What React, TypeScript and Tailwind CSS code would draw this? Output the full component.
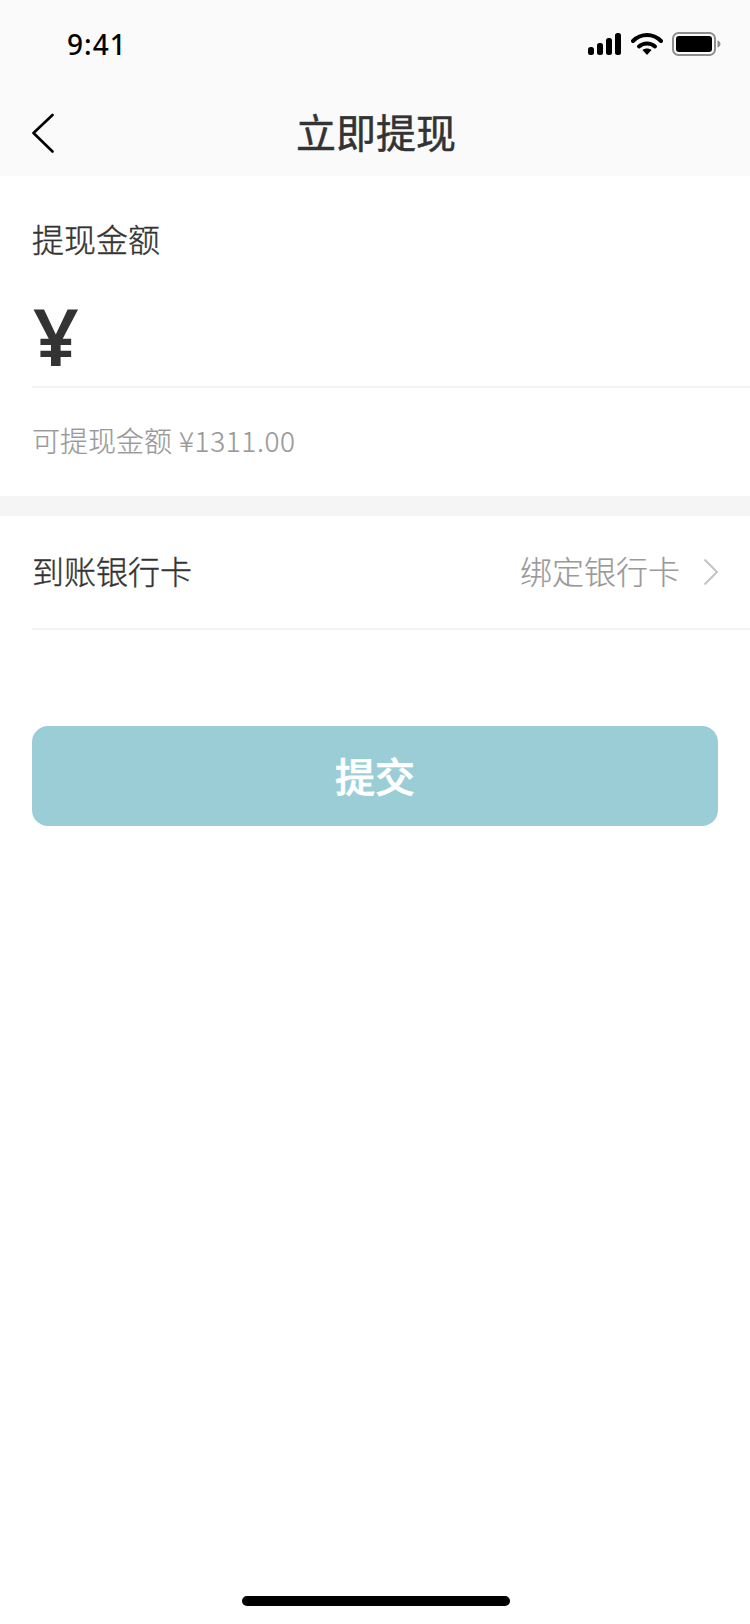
const cjk = 'font-["Noto_Sans_CJK_SC","Noto_Sans",sans-serif]'

function StatusIcons() {
  return (
    <div className="flex items-center">
      {/* Signal */}
      <svg width="36" height="22" viewBox="0 0 36 22" className="mr-[8px]">
        <rect x="1" y="14" width="6" height="8" rx="2.5" fill="#000" />
        <rect x="10" y="10" width="6" height="12" rx="2.5" fill="#000" />
        <rect x="19" y="5" width="6" height="17" rx="2.5" fill="#000" />
        <rect x="28" y="0" width="6" height="22" rx="2.5" fill="#000" />
      </svg>
      {/* Wifi */}
      <svg width="32" height="22" viewBox="0 0 32 22" className="mr-[9px]">
        <path d="M2 8 C10 0 22 0 30 8" fill="none" stroke="#000" strokeWidth="4" strokeLinecap="round" />
        <path d="M8 13.5 C12.5 9.5 19.5 9.5 24 13.5" fill="none" stroke="#000" strokeWidth="4" strokeLinecap="round" />
        <path d="M11.5 17 L16 22 L20.5 17 C18 15 14 15 11.5 17 Z" fill="#000" />
      </svg>
      {/* Battery */}
      <svg width="50" height="24" viewBox="0 0 50 24">
        <rect x="1" y="1" width="42" height="22" rx="5.5" fill="none" stroke="#8e8e8e" strokeWidth="2" />
        <rect x="4" y="4" width="36" height="16" rx="3" fill="#000" />
        <path d="M45.5 8.5 C47.5 9.2 48.5 10.4 48.5 12 C48.5 13.6 47.5 14.8 45.5 15.5 Z" fill="#8e8e8e" />
      </svg>
    </div>
  )
}

export default function App() {
  return (
    <div className={`w-[750px] h-[1624px] bg-white flex flex-col ${cjk}`}>
      {/* Header */}
      <div className="bg-[#fafafa] h-[176px] shrink-0">
        <div className="h-[88px] flex items-center justify-between pl-[67px] pr-[28px]">
          <span className='text-[28px] leading-none font-["Noto_Sans",sans-serif] font-medium text-black tracking-[1px]'>9:41</span>
          <StatusIcons />
        </div>
        <div className="h-[88px] relative flex items-center justify-center pl-[2px] pb-[2px]">
          <svg width="24" height="40" viewBox="0 0 24 40" className="absolute left-[31px] top-[25px]">
            <path d="M21.5 2 L2.5 20 L21.5 38.5" fill="none" stroke="#000" strokeWidth="2.6" strokeLinecap="round" strokeLinejoin="round" />
          </svg>
          <span className="text-[40px] leading-none font-normal text-[#333] [-webkit-text-stroke:0.5px_#333]">立即提现</span>
        </div>
      </div>

      {/* Amount */}
      <div className="pl-[32px] pt-[44px] shrink-0">
        <div className="text-[32px] leading-[36px] font-light text-[#333] [-webkit-text-stroke:0.4px_#333]">提现金额</div>
        <div className="h-[132px] pt-[28px] border-b-2 border-[#f3f3f3] flex items-center">
          <span className='text-[80px] leading-none font-["Noto_Sans",sans-serif] font-semibold text-[#333] ml-[1px]'>¥</span>
        </div>
        <div className="h-[108px] pb-[5px] flex items-center text-[28px] font-light text-[#999] [-webkit-text-stroke:0.2px_#999]">
          可提现金额 <span className="ml-[7px] tracking-[0.6px]">¥1311.00</span>
        </div>
      </div>

      <div className="h-[20px] bg-[#f5f5f5] shrink-0" />

      {/* Bank card row */}
      <div className="ml-[32px] h-[114px] pb-[5px] border-b-2 border-[#f3f3f3] flex items-center justify-between pr-[31px] shrink-0">
        <span className="text-[32px] font-light text-[#333] [-webkit-text-stroke:0.4px_#333]">到账银行卡</span>
        <div className="flex items-center">
          <span className="text-[32px] font-light text-[#999] [-webkit-text-stroke:0.2px_#999]">绑定银行卡</span>
          <svg width="16" height="28" viewBox="0 0 16 28" className="ml-[23px] mt-[4px]">
            <path d="M1.5 1.5 L14 14 L1.5 26.5" fill="none" stroke="#c4c4c4" strokeWidth="2" />
          </svg>
        </div>
      </div>

      {/* Submit */}
      <div className="px-[32px] pt-[96px] shrink-0">
        <button className="w-full h-[100px] pb-[2px] rounded-[16px] bg-[#9acdd6] text-white text-[40px] font-medium [-webkit-text-stroke:0.7px_#fff] flex items-center justify-center">
          提交
        </button>
      </div>

      {/* Home indicator */}
      <div className="mt-auto pb-[18px] pl-[2px] flex justify-center">
        <div className="w-[268px] h-[10px] rounded-full bg-black" />
      </div>
    </div>
  )
}
